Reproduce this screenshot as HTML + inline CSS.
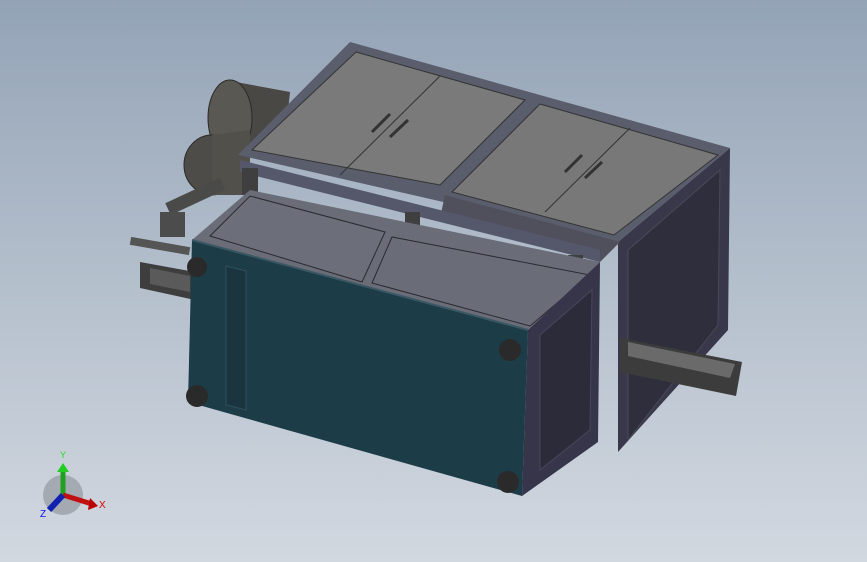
<!DOCTYPE html>
<html><head><style>
html,body{margin:0;padding:0}
body{width:867px;height:562px;overflow:hidden;background:linear-gradient(180deg,#93a3b6 0%,#b4bfcc 50%,#d2d8e0 100%);font-family:"Liberation Sans",sans-serif}
svg{position:absolute;left:0;top:0}
</style></head><body>
<svg width="867" height="562" viewBox="0 0 867 562">
<!-- motors left -->
<polygon points="225,80 290,92 285,140 210,160" fill="#4a4844"/>
<ellipse cx="230" cy="118" rx="22" ry="38" fill="#5a5852" stroke="#2a2a28"/>
<ellipse cx="212" cy="165" rx="28" ry="30" fill="#4e4c48" stroke="#2a2a28"/>
<polygon points="212,135 250,130 250,195 212,195" fill="#52504b"/>
<rect x="165" y="190" width="60" height="13" fill="#4a4a48" transform="rotate(-25 195 196)"/>
<rect x="130" y="242" width="60" height="8" fill="#555" transform="rotate(10 160 246)"/>
<polygon points="140,262 195,272 195,300 140,288" fill="#3e3e3e"/>
<polygon points="150,268 190,276 190,292 150,284" fill="#5a5a5a"/>
<rect x="160" y="212" width="25" height="25" fill="#4c4c4c"/>
<!-- back frame right side -->
<polygon points="618,242 730,148 728,330 618,452" fill="#39384a"/>
<polygon points="628,250 720,170 718,325 628,440" fill="#2f2e3c" stroke="#4a4a55"/>
<!-- back frame top -->
<polygon points="350,42 730,148 618,242 238,155" fill="#5a5d6c"/>
<polygon points="356,52 525,100 440,185 252,150" fill="#7a7a7a" stroke="#333"/>
<polygon points="540,104 718,155 614,235 452,192" fill="#787878" stroke="#333"/>
<line x1="440" y1="76" x2="340" y2="175" stroke="#333" stroke-width="1"/>
<line x1="630" y1="128" x2="545" y2="212" stroke="#333" stroke-width="1"/>
<line x1="372" y1="132" x2="390" y2="114" stroke="#333" stroke-width="3"/>
<line x1="390" y1="137" x2="408" y2="120" stroke="#333" stroke-width="3"/>
<line x1="565" y1="172" x2="582" y2="155" stroke="#333" stroke-width="3"/>
<line x1="585" y1="178" x2="602" y2="162" stroke="#333" stroke-width="3"/>
<!-- inner structure under top -->
<polygon points="445,195 620,242 600,262 440,218" fill="#50505c"/>
<!-- rail bars -->
<polygon points="240,160 600,250 600,262 240,172" fill="#55586a"/>
<polygon points="242,168 258,168 258,195 242,195" fill="#3f3f3f"/>
<polygon points="405,212 420,212 420,240 405,240" fill="#3f3f3f"/>
<polygon points="568,255 583,255 583,282 568,282" fill="#3f3f3f"/>
<!-- front box top -->
<polygon points="192,240 250,190 600,262 528,330" fill="#6a6d78"/>
<polygon points="210,236 250,196 385,232 362,282" fill="#6c6f7a" stroke="#2a2a30"/>
<polygon points="372,283 392,237 590,275 530,326" fill="#6a6d78" stroke="#2a2a30"/>
<!-- front box side -->
<polygon points="528,330 600,262 598,442 522,496" fill="#36354a"/>
<polygon points="540,335 592,290 590,430 540,470" fill="#2c2b3a" stroke="#48475a"/>
<!-- front box teal face -->
<polygon points="192,240 528,330 522,496 188,402" fill="#1c3c48"/>
<polygon points="226,266 246,271 246,410 226,405" fill="#1a3540" stroke="#2e505c"/>
<line x1="192" y1="240" x2="528" y2="330" stroke="#3a5864" stroke-width="2"/>
<!-- feet -->
<circle cx="197" cy="267" r="10" fill="#2a2a2a"/>
<circle cx="510" cy="350" r="11" fill="#2a2a2a"/>
<circle cx="197" cy="396" r="11" fill="#2a2a2a"/>
<circle cx="508" cy="482" r="11" fill="#2a2a2a"/>
<!-- right rail -->
<polygon points="620,338 742,362 736,396 620,372" fill="#3c3c3c"/>
<polygon points="628,342 735,364 730,378 628,356" fill="#6a6a6a"/>
<!-- axis triad -->
<circle cx="63" cy="495" r="20" fill="#8a8f96" opacity="0.6"/>
<line x1="63" y1="495" x2="63" y2="470" stroke="#1fa01f" stroke-width="5"/>
<polygon points="57,472 69,472 63,463" fill="#2c2"/>
<line x1="63" y1="495" x2="92" y2="504" stroke="#c01010" stroke-width="5"/>
<polygon points="90,498 98,506 88,510" fill="#b00"/>
<line x1="63" y1="495" x2="49" y2="510" stroke="#1020b0" stroke-width="6"/>
<text x="60" y="458" font-size="9" fill="#2d2">Y</text>
<text x="99" y="508" font-size="10" fill="#d00">X</text>
<text x="40" y="517" font-size="10" fill="#11e">Z</text>
</svg>
</body></html>
